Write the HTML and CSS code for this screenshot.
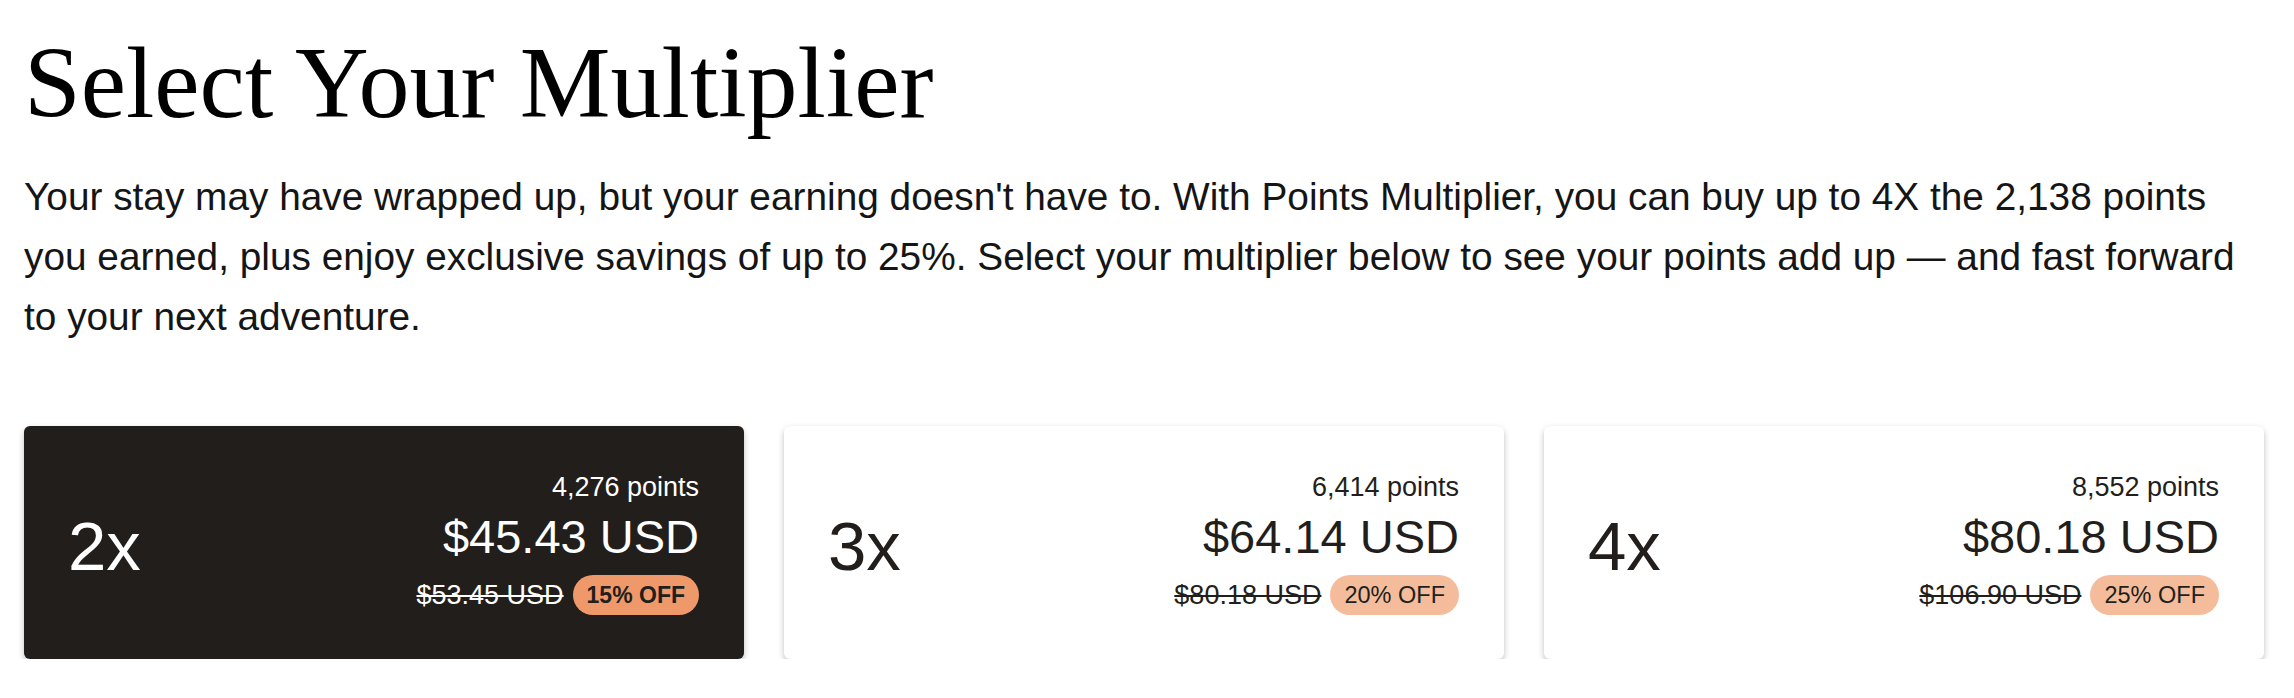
FILE: index.html
```html
<!DOCTYPE html>
<html lang="en">
<head>
  <meta charset="UTF-8"/>
  <meta name="viewport" content="width=device-width, initial-scale=1.0"/>
  <title>Points Multiplier – Select Your Multiplier</title>
  <link rel="stylesheet" href="styles.css">
</head>
<body>

  <!-- Intro -->
  <section class="intro">
    <h1>Select Your Multiplier</h1>
    <p>Your stay may have wrapped up, but your earning doesn't have to. With Points Multiplier, you can buy up to 4X the 2,138 points you earned, plus enjoy exclusive savings of up to 25%. Select your multiplier below to see your points add up — and fast forward to your next adventure.</p>
  </section>

  <!-- Multiplier options -->
  <section class="options">
    <div class="option selected">
      <div class="factor">2x</div>
      <div class="pricing">
        <div class="points">4,276 points</div>
        <div class="price">$45.43 USD</div>
        <div class="discount">
          <span class="was">$53.45 USD</span>
          <span class="badge">15% OFF</span>
        </div>
      </div>
    </div>

    <div class="option">
      <div class="factor">3x</div>
      <div class="pricing">
        <div class="points">6,414 points</div>
        <div class="price">$64.14 USD</div>
        <div class="discount">
          <span class="was">$80.18 USD</span>
          <span class="badge">20% OFF</span>
        </div>
      </div>
    </div>

    <div class="option">
      <div class="factor">4x</div>
      <div class="pricing">
        <div class="points">8,552 points</div>
        <div class="price">$80.18 USD</div>
        <div class="discount">
          <span class="was">$106.90 USD</span>
          <span class="badge">25% OFF</span>
        </div>
      </div>
    </div>
  </section>

</body>
</html>
```

FILE: styles.css
```css
html, body {
  margin: 0;
  padding: 0;
  background: #fff;
  color: #111;
  font-family: "Liberation Sans", Arial, sans-serif;
}

body {
  padding: 33px 24px 0;
}

/* Intro */
.intro h1 {
  margin: 0;
  font-family: "Liberation Serif", "Times New Roman", serif;
  font-size: 102px;
  font-weight: normal;
  line-height: 100px;
  color: #000;
}

.intro p {
  margin: 34px 0 0;
  font-size: 38.8px;
  line-height: 60px;
  color: #151515;
}

/* Option cards */
.options {
  display: grid;
  grid-template-columns: 1fr 1fr 1fr;
  gap: 40px;
  max-width: 2240px;
  margin-top: 79px;
}

.option {
  display: flex;
  justify-content: space-between;
  align-items: center;
  height: 233px;
  padding: 0 45px 0 44px;
  box-sizing: border-box;
  background: #fff;
  color: #221e1b;
  border-radius: 6px;
  box-shadow: 0 3px 6px rgba(0, 0, 0, 0.25);
}

.option.selected {
  background: #221e1b;
  color: #fff;
}

.factor {
  margin-top: 8px;
  font-size: 69px;
}

.pricing {
  display: flex;
  flex-direction: column;
  align-items: flex-end;
}

.points {
  font-size: 27px;
  line-height: 32px;
}

.price {
  margin-top: 6px;
  font-size: 47px;
  line-height: 56px;
}

.discount {
  display: flex;
  align-items: center;
  gap: 9px;
  margin-top: 10px;
}

.was {
  font-size: 27px;
  line-height: 32px;
  text-decoration: line-through;
}

.badge {
  height: 40px;
  padding: 0 14px;
  border-radius: 20px;
  background: #f4bc9b;
  color: #221e1b;
  font-size: 23.5px;
  line-height: 40px;
}

.selected .badge {
  background: #ef996b;
  font-weight: bold;
  font-size: 23px;
}
```
